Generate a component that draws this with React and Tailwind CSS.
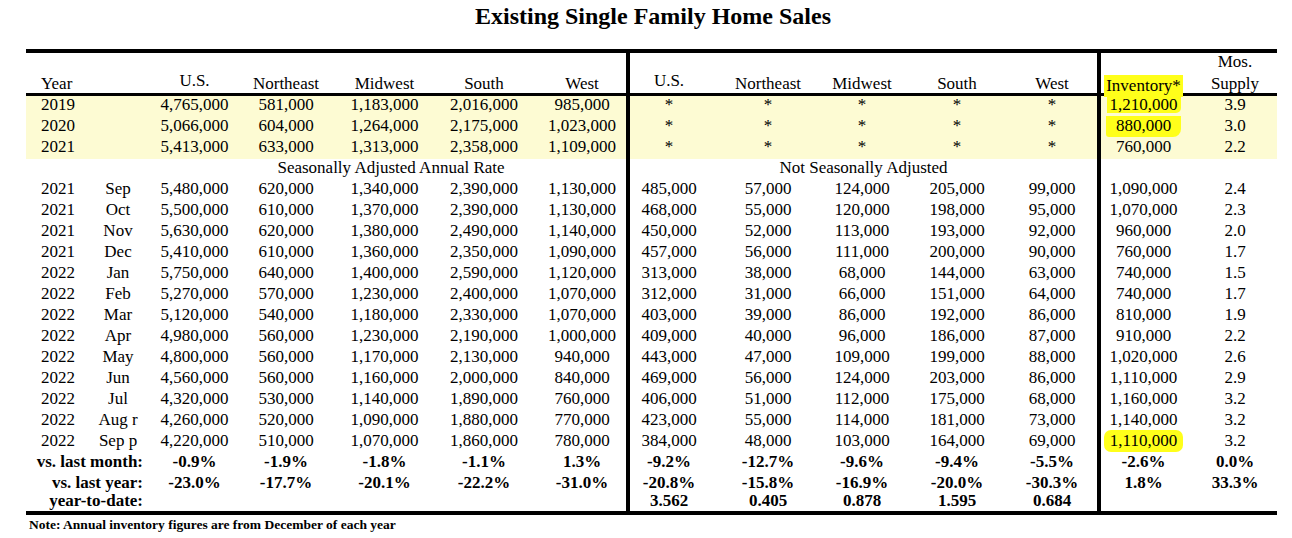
import React from 'react';

const GRID =
  'grid grid-cols-[54px_76px_77px_106px_91px_108px_88px_4px_78px_120px_68px_122px_79px_4px_85px_91px]';

const annual = [
  { year: '2019', left: ['4,765,000', '581,000', '1,183,000', '2,016,000', '985,000'], inv: '1,210,000', mos: '3.9', mark: 'a' },
  { year: '2020', left: ['5,066,000', '604,000', '1,264,000', '2,175,000', '1,023,000'], inv: '880,000', mos: '3.0', mark: 'b' },
  { year: '2021', left: ['5,413,000', '633,000', '1,313,000', '2,358,000', '1,109,000'], inv: '760,000', mos: '2.2' },
];

const monthly = [
  ['2021', 'Sep', '5,480,000', '620,000', '1,340,000', '2,390,000', '1,130,000', '485,000', '57,000', '124,000', '205,000', '99,000', '1,090,000', '2.4'],
  ['2021', 'Oct', '5,500,000', '610,000', '1,370,000', '2,390,000', '1,130,000', '468,000', '55,000', '120,000', '198,000', '95,000', '1,070,000', '2.3'],
  ['2021', 'Nov', '5,630,000', '620,000', '1,380,000', '2,490,000', '1,140,000', '450,000', '52,000', '113,000', '193,000', '92,000', '960,000', '2.0'],
  ['2021', 'Dec', '5,410,000', '610,000', '1,360,000', '2,350,000', '1,090,000', '457,000', '56,000', '111,000', '200,000', '90,000', '760,000', '1.7'],
  ['2022', 'Jan', '5,750,000', '640,000', '1,400,000', '2,590,000', '1,120,000', '313,000', '38,000', '68,000', '144,000', '63,000', '740,000', '1.5'],
  ['2022', 'Feb', '5,270,000', '570,000', '1,230,000', '2,400,000', '1,070,000', '312,000', '31,000', '66,000', '151,000', '64,000', '740,000', '1.7'],
  ['2022', 'Mar', '5,120,000', '540,000', '1,180,000', '2,330,000', '1,070,000', '403,000', '39,000', '86,000', '192,000', '86,000', '810,000', '1.9'],
  ['2022', 'Apr', '4,980,000', '560,000', '1,230,000', '2,190,000', '1,000,000', '409,000', '40,000', '96,000', '186,000', '87,000', '910,000', '2.2'],
  ['2022', 'May', '4,800,000', '560,000', '1,170,000', '2,130,000', '940,000', '443,000', '47,000', '109,000', '199,000', '88,000', '1,020,000', '2.6'],
  ['2022', 'Jun', '4,560,000', '560,000', '1,160,000', '2,000,000', '840,000', '469,000', '56,000', '124,000', '203,000', '86,000', '1,110,000', '2.9'],
  ['2022', 'Jul', '4,320,000', '530,000', '1,140,000', '1,890,000', '760,000', '406,000', '51,000', '112,000', '175,000', '68,000', '1,160,000', '3.2'],
  ['2022', 'Aug r', '4,260,000', '520,000', '1,090,000', '1,880,000', '770,000', '423,000', '55,000', '114,000', '181,000', '73,000', '1,140,000', '3.2'],
  ['2022', 'Sep p', '4,220,000', '510,000', '1,070,000', '1,860,000', '780,000', '384,000', '48,000', '103,000', '164,000', '69,000', '1,110,000', '3.2'],
];

const summary = [
  { label: 'vs. last month:', vals: ['-0.9%', '-1.9%', '-1.8%', '-1.1%', '1.3%', '-9.2%', '-12.7%', '-9.6%', '-9.4%', '-5.5%', '-2.6%', '0.0%'], h: 'h-[21px]' },
  { label: 'vs. last year:', vals: ['-23.0%', '-17.7%', '-20.1%', '-22.2%', '-31.0%', '-20.8%', '-15.8%', '-16.9%', '-20.0%', '-30.3%', '1.8%', '33.3%'], h: 'h-[18px]' },
  { label: 'year-to-date:', vals: ['', '', '', '', '', '3.562', '0.405', '0.878', '1.595', '0.684', '', ''], h: 'h-[19px]' },
];

const Cell = ({ children, className = '' }) => (
  <div className={`text-center whitespace-nowrap ${className}`}>{children}</div>
);

const Bar = () => <div className="bg-black" />;

// left 5 values, right 5 values, inventory, supply
const Values = ({ vals, inv, mos }) => (
  <>
    {vals.slice(0, 5).map((v, i) => <Cell key={'l' + i}>{v}</Cell>)}
    <Bar />
    {vals.slice(5, 10).map((v, i) => (
      <Cell key={'r' + i} className={i === 4 ? 'pr-[11px]' : ''}>{v}</Cell>
    ))}
    <Bar />
    <Cell>{inv}</Cell>
    <Cell className="pl-[7px]">{mos}</Cell>
  </>
);

const Highlight = ({ mark, children }) => {
  if (mark === 'a') {
    return <span className="inline-block bg-[#ffff1a] px-[3px] rounded-br-[5px]">{children}</span>;
  }
  if (mark === 'b') {
    return (
      <span className="inline-block bg-[#ffff1a] px-[10px] -mt-[1px] pt-[1px] pb-[3px] rounded-bl-[3px] rounded-br-[8px]">
        {children}
      </span>
    );
  }
  if (mark === 'c') {
    return (
      <span className="inline-block bg-[#ffff1a] px-[6px] -mt-[2px] pt-[2px] pb-[3px] rounded-[7px]">{children}</span>
    );
  }
  return children;
};

export default function App() {
  const headers = ['Northeast', 'Midwest', 'South'];
  return (
    <div className="w-[1292px] h-[538px] bg-white text-black font-['Liberation_Serif','Times_New_Roman',serif] text-[17px] leading-[17px]">
      <h1 className="h-[49px] pt-[4px] pl-[14px] text-center text-[24px] leading-[24px] font-bold">
        Existing Single Family Home Sales
      </h1>

      <div className="ml-[26px] w-[1251px]">
        <div className="h-[4px] bg-black" />

        {/* header */}
        <div className={`${GRID} h-[40px]`}>
          <div className="flex items-end pl-[15px] pb-[6px]">Year</div>
          <div />
          <div className="flex items-end justify-center pb-[9px]">U.S.</div>
          {headers.map((h) => (
            <div key={h} className="flex items-end justify-center pb-[6px]">{h}</div>
          ))}
          <div className="flex items-end justify-center pb-[6px]">West</div>
          <Bar />
          <div className="flex items-end justify-center pb-[9px]">U.S.</div>
          {headers.map((h) => (
            <div key={'r' + h} className="flex items-end justify-center pb-[6px]">{h}</div>
          ))}
          <div className="flex items-end justify-center pb-[6px] pr-[11px]">West</div>
          <Bar />
          <div className="flex items-end justify-center pb-[1px]">
            <span className="bg-[#ffff1a] px-[2px] pt-[2px] pb-[3px]">Inventory*</span>
          </div>
          <div className="flex flex-col items-center justify-end gap-[5px] pb-[6px] pl-[7px]">
            <span>Mos.</span>
            <span>Supply</span>
          </div>
        </div>

        <div className="h-[3px] bg-black" />

        {/* annual rows */}
        <div className="bg-[#fdfbd3]">
          {annual.map((r) => (
            <div key={r.year} className={`${GRID} h-[21px]`}>
              <div className="pl-[15px]">{r.year}</div>
              <div />
              <Values
                vals={[...r.left, '*', '*', '*', '*', '*']}
                inv={<Highlight mark={r.mark}>{r.inv}</Highlight>}
                mos={r.mos}
              />
            </div>
          ))}
        </div>

        {/* label row */}
        <div className={`${GRID} h-[21px]`}>
          <div className="col-span-2" />
          <div className="col-span-5 text-center">Seasonally Adjusted Annual Rate</div>
          <Bar />
          <div className="col-span-5 text-center">Not Seasonally Adjusted</div>
          <Bar />
          <div className="col-span-2" />
        </div>

        {/* monthly rows */}
        {monthly.map((r, idx) => (
          <div key={r[0] + r[1]} className={`${GRID} h-[21px]`}>
            <div className="pl-[15px]">{r[0]}</div>
            <Cell>{r[1]}</Cell>
            <Values
              vals={r.slice(2, 12)}
              inv={idx === monthly.length - 1 ? <Highlight mark="c">{r[12]}</Highlight> : r[12]}
              mos={r[13]}
            />
          </div>
        ))}

        {/* summary rows */}
        {summary.map((s) => (
          <div key={s.label} className={`${GRID} ${s.h} font-bold`}>
            <div className="col-span-2 text-right pr-[13px] whitespace-nowrap">{s.label}</div>
            <Values vals={s.vals.slice(0, 10)} inv={s.vals[10]} mos={s.vals[11]} />
          </div>
        ))}

        <div className="h-[4px] bg-black" />
      </div>

      <p className="mt-[3px] pl-[29px] text-[13.5px] leading-[13px] font-bold">
        Note: Annual inventory figures are from December of each year
      </p>
    </div>
  );
}
